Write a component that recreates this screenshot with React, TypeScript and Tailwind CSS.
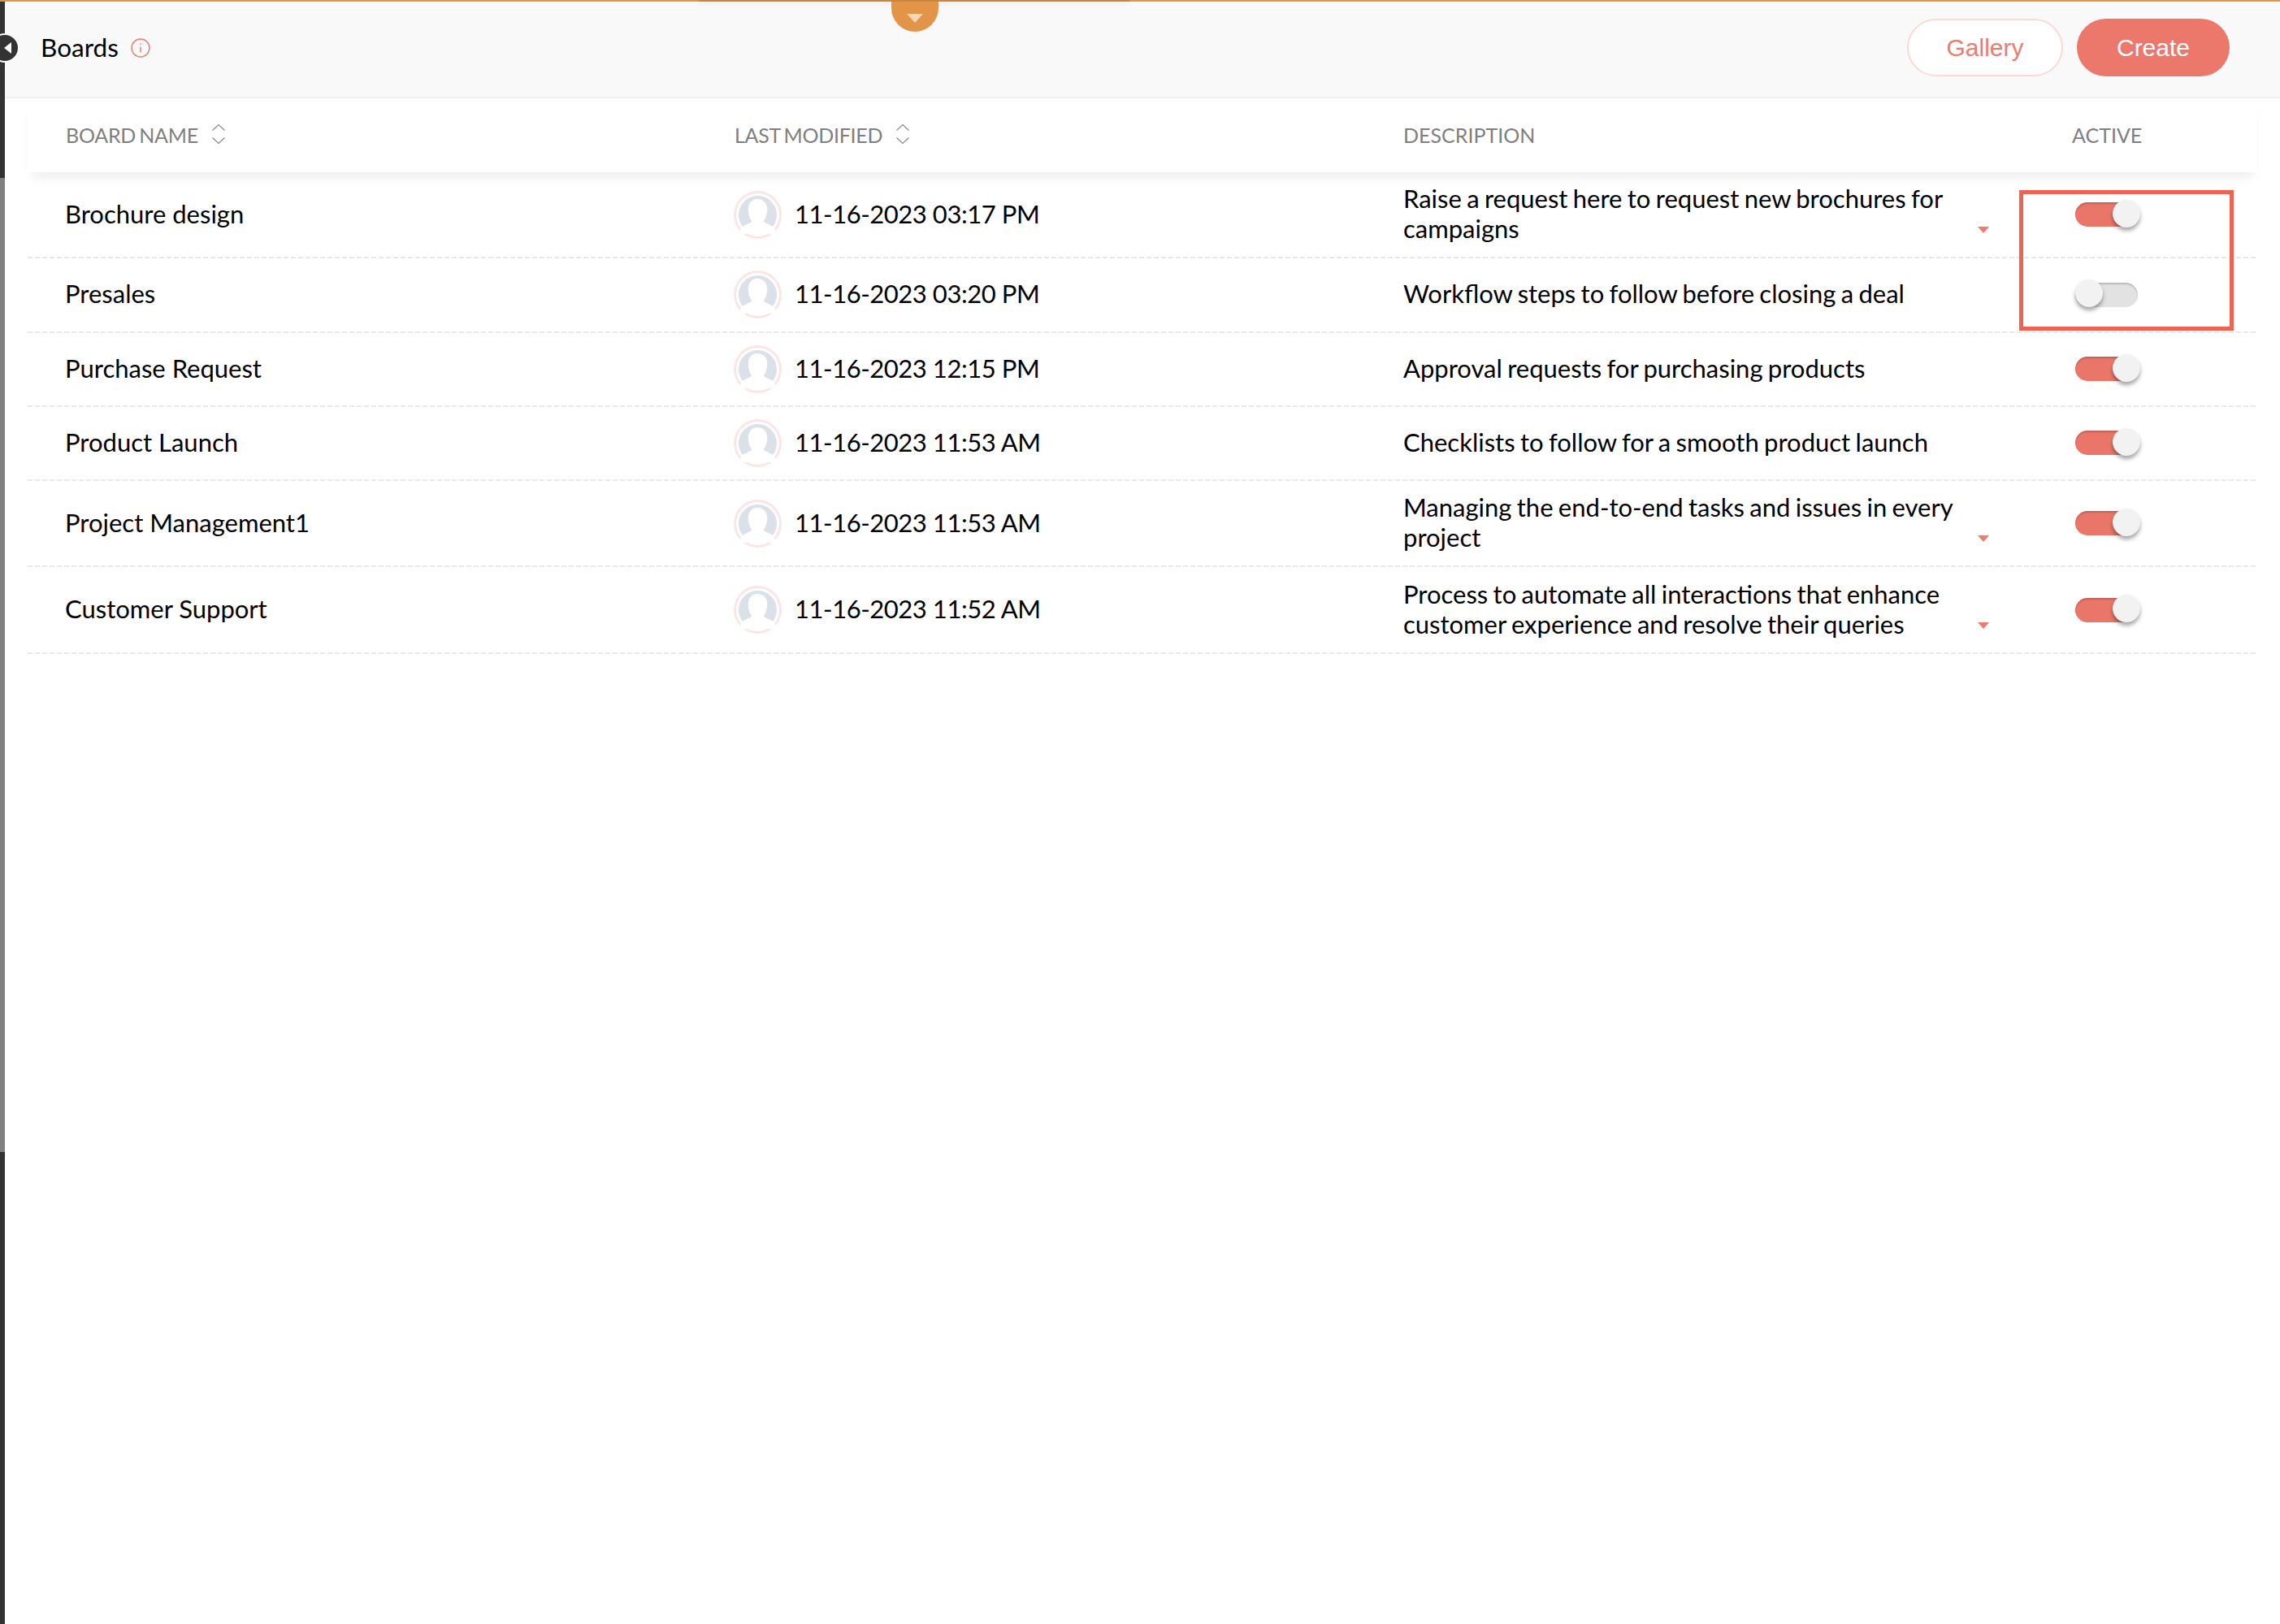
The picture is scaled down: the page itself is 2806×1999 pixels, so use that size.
import React from "react";

const boards = [
  {
    name: "Brochure design",
    modified: "11-16-2023 03:17 PM",
    description: "Raise a request here to request new brochures for campaigns",
    more: true,
    active: true,
  },
  {
    name: "Presales",
    modified: "11-16-2023 03:20 PM",
    description: "Workflow steps to follow before closing a deal",
    more: false,
    active: false,
  },
  {
    name: "Purchase Request",
    modified: "11-16-2023 12:15 PM",
    description: "Approval requests for purchasing products",
    more: false,
    active: true,
  },
  {
    name: "Product Launch",
    modified: "11-16-2023 11:53 AM",
    description: "Checklists to follow for a smooth product launch",
    more: false,
    active: true,
  },
  {
    name: "Project Management1",
    modified: "11-16-2023 11:53 AM",
    description: "Managing the end-to-end tasks and issues in every project",
    more: true,
    active: true,
  },
  {
    name: "Customer Support",
    modified: "11-16-2023 11:52 AM",
    description: "Process to automate all interactions that enhance customer experience and resolve their queries",
    more: true,
    active: true,
  },
];

function SortIcon() {
  return (
    <svg width="18" height="26" viewBox="0 0 18 26" fill="none" stroke="#8a8a8a" strokeWidth="1.2" className="ml-[16px] -mt-[4px]">
      <path d="M1.5 8.5 9 1.5l7.5 7" />
      <path d="M1.5 17.5 9 24.5l7.5-7" />
    </svg>
  );
}

function Avatar() {
  return (
    <div className="w-[59px] h-[59px] rounded-full border-[3px] border-[#fbe6e5] p-[3px] shrink-0">
      <svg viewBox="0 0 48 48" className="w-full h-full block">
        <circle cx="24" cy="24" r="24" fill="#dbe0e9" />
        <path
          d="M23.5 4C16 4 12 10 12 17c0 6 2 11 4 14 1 2-1 3-4 4l-8 4-4 9h48l-4-9-8-4c-3-1-5-2-4-4 2-3 4-8 4-14 0-7-4-13-12.500-13z"
          fill="#ffffff"
        />
      </svg>
    </div>
  );
}

function Toggle({ on }: { on: boolean }) {
  return (
    <div
      className={`w-[77px] h-[30px] rounded-full flex items-center shadow-[inset_0_2px_2px_rgba(0,0,0,0.18)] ${
        on ? "bg-[#ea7669] justify-end" : "bg-[#e2e2e2] justify-start"
      }`}
    >
      <div
        className={`w-[34px] h-[34px] -mt-[3px] rounded-full bg-[#f2f2f2] shadow-[0_4px_5px_rgba(0,0,0,0.35)] shrink-0 ${
          on ? "-mr-[3px]" : ""
        }`}
      />
    </div>
  );
}

export default function App() {
  return (
    <div className="relative w-[2806px] h-[1999px] bg-white overflow-hidden font-['Lato',sans-serif] text-black">
      <div className="h-[2px] bg-[#e29549]" />

      <div className="flex h-[1997px]">
        <div className="w-[6px] flex flex-col shrink-0">
          <div className="h-[217px] bg-[#333333]" />
          <div className="h-[1199px] bg-[#808080]" />
          <div className="flex-1 bg-[#333333]" />
        </div>

        <div className="flex-1">
          <header className="h-[119px] bg-[#f9f9f9] border-b-2 border-[#f2f2f2] flex items-center pl-[44px] pr-[62px] pb-[4px]">
            <span className="text-[31.5px] leading-none">Boards</span>
            <svg width="24" height="24" viewBox="0 0 24 24" fill="none" stroke="#ee7b6e" strokeWidth="1.4" className="ml-[15px]">
              <circle cx="12" cy="12" r="11" />
              <path d="M12 10.5v7M12 6.5v1.6" />
            </svg>
            <div className="ml-auto flex items-center gap-[17px]">
              <button className="w-[192px] h-[71px] rounded-full bg-white border-2 border-[#fbd9d4] text-[#ee7b6e] text-[30px] font-['Liberation_Sans',sans-serif]">
                Gallery
              </button>
              <button className="w-[188px] h-[71px] rounded-full bg-[#ec776b] text-white text-[30px] font-['Liberation_Sans',sans-serif]">
                Create
              </button>
            </div>
          </header>

          <div className="ml-[28px] w-[2744px]">
            <div className="grid grid-cols-[823px_823px_823px_275px] h-[91px] items-center text-[25px] text-[#7f7f7f] bg-white shadow-[0_12px_14px_-6px_rgba(0,0,0,0.08)]">
              <div className="pl-[47px] flex items-center">
                <span className="tracking-[-0.25px] [word-spacing:-2px]">BOARD NAME</span>
                <SortIcon />
              </div>
              <div className="pl-[47px] flex items-center">
                <span className="tracking-[-0.25px] [word-spacing:-2px]">LAST MODIFIED</span>
                <SortIcon />
              </div>
              <div className="pl-[47px]">DESCRIPTION</div>
              <div className="pl-[47px]">ACTIVE</div>
            </div>

            {boards.map((b) => (
              <div key={b.name}>
                <div className="grid grid-cols-[823px_823px_823px_275px] items-center py-[15.15px] text-[31px] leading-[37px]">
                  <div className="pl-[46px] -translate-y-px">{b.name}</div>
                  <div className="pl-[46px] flex items-center gap-[16px]">
                    <Avatar />
                    <span className="tracking-[-0.45px] -translate-y-px">{b.modified}</span>
                  </div>
                  <div className="pl-[47px] flex items-end">
                    <div className="w-[680px] shrink-0 [word-spacing:-1.6px] -translate-y-px">{b.description}</div>
                    {b.more && (
                      <svg width="14" height="8" viewBox="0 0 14 8" className="ml-[27px] mb-[14px] shrink-0">
                        <path d="M0 0h14L7 8z" fill="#ee7b6e" />
                      </svg>
                    )}
                  </div>
                  <div className="pl-[51px]">
                    <Toggle on={b.active} />
                  </div>
                </div>
                <div className="h-[2px] bg-[repeating-linear-gradient(90deg,#e8e8e8_0,#e8e8e8_6px,transparent_6px,transparent_9px)]" />
              </div>
            ))}
          </div>
        </div>
      </div>

      {/* collapse button on the left edge */}
      <div className="absolute left-[-12px] top-[41px] w-[36px] h-[36px] rounded-full bg-[#333333] border-2 border-white flex items-center justify-center pl-[6px]">
        <svg width="9" height="14" viewBox="0 0 9 14">
          <path d="M9 0v14L0 7z" fill="#ffffff" />
        </svg>
      </div>

      {/* shadow the pull-down panel throws over the top bar */}
      <div className="absolute left-[860px] top-0 w-[530px] h-[2px] bg-black/10 shadow-[0_2px_6px_rgba(0,0,0,0.1)]" />

      {/* pull-down handle on the top bar */}
      <div className="absolute left-[1097px] top-[2px] w-[58px] h-[37px] rounded-b-[29px] bg-[#e29549] flex justify-center pt-[15px]">
        <svg width="20" height="11" viewBox="0 0 20 11">
          <path d="M0 0h20L10 11z" fill="#f5d6b5" />
        </svg>
      </div>

      {/* annotation box drawn on the screenshot */}
      <div className="absolute left-[2485px] top-[234px] w-[264px] h-[173px] border-[5px] border-[#ee6352]" />
    </div>
  );
}
